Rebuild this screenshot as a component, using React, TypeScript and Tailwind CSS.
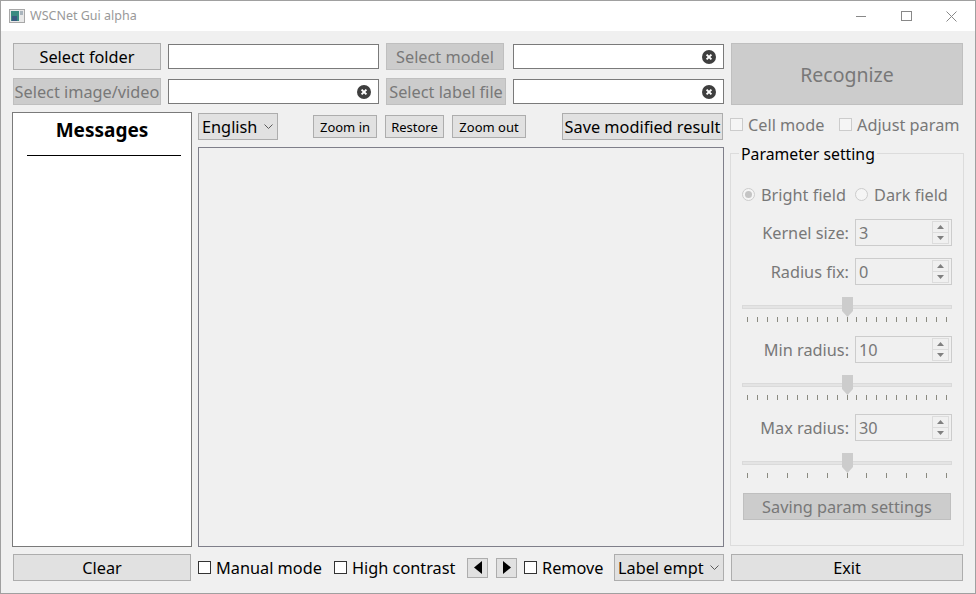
import React from "react";

const base = "flex items-center justify-center whitespace-nowrap border leading-none pt-[2px]";
const active = "bg-[#e1e1e1] border-[#adadad] text-black";
const disabled = "bg-[#cccccc] border-[#bfbfbf] text-[#787878]";

function Btn({ w, h = "h-[27px]", off, size = "text-[16.3px]", children }: { w: string; h?: string; off?: boolean; size?: string; children: React.ReactNode }) {
  return <div className={`${base} ${w} ${h} ${size} ${off ? disabled : active}`}>{children}</div>;
}

function Clear() {
  return (
    <svg width="14" height="14" viewBox="0 0 14 14" className="shrink-0">
      <circle cx="7" cy="7" r="7" fill="#3f3f3f" />
      <path d="M4.6 4.6 9.4 9.4M9.4 4.6 4.6 9.4" stroke="#fff" strokeWidth="2" />
    </svg>
  );
}

function Field({ clear }: { clear?: boolean }) {
  return (
    <div className="flex items-center justify-end w-[211px] h-[25px] bg-white border border-[#7a7a7a] pr-[7px]">
      {clear && <Clear />}
    </div>
  );
}

function Check({ label, off, w }: { label: string; off?: boolean; w: string }) {
  return (
    <div className={`flex items-center gap-[5px] ${w} text-[16.3px] leading-none whitespace-nowrap ${off ? "text-[#787878]" : "text-black"}`}>
      <div className={`w-[13px] h-[13px] shrink-0 border ${off ? "border-[#cccccc] bg-[#f5f5f5]" : "border-[#333333] bg-white"}`} />
      <span className={off ? "" : "pt-[2px]"}>{label}</span>
    </div>
  );
}

function Radio({ label, on, w }: { label: string; on?: boolean; w: string }) {
  return (
    <div className={`flex items-center gap-[6px] ${w} text-[16.3px] leading-none text-[#787878] whitespace-nowrap`}>
      <div className="flex items-center justify-center w-[13px] h-[13px] shrink-0 rounded-full border border-[#cccccc] bg-[#f5f5f5]">
        {on && <div className="w-[7px] h-[7px] rounded-full bg-[#c4c4c4]" />}
      </div>
      {label}
    </div>
  );
}

function Combo({ w, h, label }: { w: string; h: string; label: string }) {
  return (
    <div className={`flex items-center justify-between gap-[2px] ${w} ${h} bg-[#e1e1e1] border border-[#adadad] pl-[3px] pr-[4px] text-[16.3px] leading-[22px] text-black whitespace-nowrap`}>
      <span>{label}</span>
      <svg width="9" height="5" viewBox="0 0 9 5" className="shrink-0">
        <path d="M.5.5 4.5 4.5 8.5.5" fill="none" stroke="#5a5a5a" />
      </svg>
    </div>
  );
}

function Spin({ label, value }: { label: string; value: string }) {
  return (
    <div className="flex items-center justify-end h-[27px] gap-[6px] text-[16.3px] leading-none text-[#787878] whitespace-nowrap">
      <span className="pt-[2px]">{label}</span>
      <div className="flex items-center justify-between w-[97px] h-[27px] border border-[#cccccc] pl-[3px] pr-[2px]">
        <span className="pt-[2px]">{value}</span>
        <div className="flex flex-col w-[17px] h-[23px] border border-[#dcdcdc]">
          <div className="flex-1 flex items-center justify-center border-b border-[#dcdcdc]">
            <svg width="7" height="4" viewBox="0 0 7 4"><path d="M3.5 0 7 4H0z" fill="#808080" /></svg>
          </div>
          <div className="flex-1 flex items-center justify-center">
            <svg width="7" height="4" viewBox="0 0 7 4"><path d="M3.5 4 7 0H0z" fill="#808080" /></svg>
          </div>
        </div>
      </div>
    </div>
  );
}

function Slider({ ticks }: { ticks: number }) {
  const xs = Array.from({ length: ticks }, (_, i) => 5 + (i * 199) / (ticks - 1));
  return (
    <div className="relative w-[210px] h-[26px]">
      <div className="absolute left-0 right-0 top-[8px] h-[4px] bg-[#e4e4e4] border border-[#dadada]" />
      <svg width="11" height="20" viewBox="0 0 11 20" className="absolute left-[100px] top-0">
        <path d="M0 0H11V14L5.5 20 0 14Z" fill="#cccccc" />
      </svg>
      <svg width="210" height="6" viewBox="0 0 210 6" className="absolute left-0 top-[20px]">
        {xs.map((x, i) => (
          <path key={i} d={`M${Math.round(x) + 0.5} 0V5`} stroke="#8a8a80" />
        ))}
      </svg>
    </div>
  );
}

function TitleIcon() {
  return (
    <svg width="16" height="14" viewBox="0 0 16 14">
      <rect x=".5" y=".5" width="15" height="13" fill="#e8e8e8" stroke="#a8a8a8" />
      <rect x="2" y="2" width="8" height="10" fill="#3a8a80" />
      <rect x="3" y="7" width="5" height="5" fill="#3a5a80" />
      <rect x="11" y="2" width="3" height="4" fill="#a9b4bd" />
    </svg>
  );
}

export default function App() {
  return (
    <div className="w-[976px] h-[594px] flex flex-col bg-[#f0f0f0] border border-[#a0a0a0] font-['Noto_Sans','Open_Sans',sans-serif] overflow-hidden">
      <div className="flex items-center h-[30px] shrink-0 bg-white pl-[8px]">
        <TitleIcon />
        <span className="ml-[5px] text-[12.5px] leading-none text-[#999999]">WSCNet Gui alpha</span>
        <div className="ml-auto flex items-center">
          <div className="flex items-center justify-center w-[46px] -mr-px">
            <svg width="10" height="10" viewBox="0 0 10 10"><path d="M0 5.5H10" stroke="#888" /></svg>
          </div>
          <div className="flex items-center justify-center w-[46px]">
            <svg width="11" height="10" viewBox="0 0 11 10"><rect x=".5" y=".5" width="10" height="9" fill="none" stroke="#888" /></svg>
          </div>
          <div className="flex items-center justify-center w-[46px] pr-[2px]">
            <svg width="11" height="11" viewBox="0 0 11 11"><path d="M.5.5 10.5 10.5M10.5.5.5 10.5" stroke="#888" /></svg>
          </div>
        </div>
      </div>

      <div className="flex gap-[6px] pl-[12px] pt-[12px]">
        <div className="flex flex-col w-[711px] shrink-0">
          <div className="flex items-center gap-[7px] h-[27px]">
            <Btn w="w-[148px]">Select folder</Btn>
            <Field />
            <Btn w="w-[118px]" off>Select model</Btn>
            <div className="ml-[2px]"><Field clear /></div>
          </div>
          <div className="flex items-center gap-[7px] h-[27px] mt-[8px]">
            <Btn w="w-[148px]" off>Select image/video</Btn>
            <Field clear />
            <Btn w="w-[120px]" off>Select label file</Btn>
            <Field clear />
          </div>

          <div className="flex gap-[6px] mt-[7px] h-[435px] -ml-px">
            <div className="flex flex-col items-center w-[180px] bg-white border border-[#7a7a7a]">
              <div className="mt-[4px] text-[19px] leading-[26px] font-bold text-black">Messages</div>
              <div className="mt-[12px] ml-[4px] w-[154px] h-px bg-black" />
            </div>
            <div className="flex flex-col w-[526px]">
              <div className="flex items-center h-[29px]">
                <Combo w="w-[80px]" h="h-[27px]" label="English" />
                <div className="ml-[35px]"><Btn w="w-[64px]" h="h-[23px]" size="text-[13px]">Zoom in</Btn></div>
                <div className="ml-[8px]"><Btn w="w-[59px]" h="h-[23px]" size="text-[13px]">Restore</Btn></div>
                <div className="ml-[8px]"><Btn w="w-[74px]" h="h-[23px]" size="text-[13px]">Zoom out</Btn></div>
                <div className="ml-[36px]"><Btn w="w-[161px]">Save modified result</Btn></div>
              </div>
              <div className="mt-[6px] flex-1 border border-[#7f7f8a]" />
            </div>
          </div>

          <div className="flex items-center mt-[7px] h-[27px]">
            <Btn w="w-[178px]">Clear</Btn>
            <div className="ml-[7px]"><Check w="w-[136px]" label="Manual mode" /></div>
            <Check w="w-[133px]" label="High contrast" />
            <div className="w-[21px] h-[20px] flex items-center justify-center bg-[#e1e1e1] border border-[#adadad]">
              <svg width="8" height="13" viewBox="0 0 8 13"><path d="M8 0V13L0 6.5Z" fill="#000" /></svg>
            </div>
            <div className="ml-[8px] w-[21px] h-[20px] flex items-center justify-center bg-[#e1e1e1] border border-[#adadad]">
              <svg width="8" height="13" viewBox="0 0 8 13"><path d="M0 0V13L8 6.5Z" fill="#000" /></svg>
            </div>
            <div className="ml-[7px]"><Check w="w-[90px]" label="Remove" /></div>
            <Combo w="w-[110px]" h="h-[27px]" label="Label empt" />
          </div>
        </div>

        <div className="flex flex-col w-[234px] shrink-0">
          <div className="ml-px"><Btn w="w-[232px]" h="h-[62px]" off size="text-[19.5px]">Recognize</Btn></div>
          <div className="flex items-center h-[40px]">
            <Check w="w-[109px]" label="Cell mode" off />
            <Check w="w-[122px]" label="Adjust param" off />
          </div>
          <div className="relative mt-[8px] h-[393px] border border-[#dcdcdc]">
            <div className="absolute left-[8px] -top-[10px] bg-[#f0f0f0] px-[2px] text-[15.8px] leading-[20px] text-black whitespace-nowrap">Parameter setting</div>
            <div className="flex flex-col pl-[11px] pr-[11px] pt-[31px]">
              <div className="flex items-center h-[20px]">
                <Radio w="w-[113px]" label="Bright field" on />
                <Radio w="w-[96px]" label="Dark field" />
              </div>
              <div className="mt-[14px]"><Spin label="Kernel size:" value="3" /></div>
              <div className="mt-[12px]"><Spin label="Radius fix:" value="0" /></div>
              <div className="mt-[12px]"><Slider ticks={21} /></div>
              <div className="mt-[13px]"><Spin label="Min radius:" value="10" /></div>
              <div className="mt-[12px]"><Slider ticks={21} /></div>
              <div className="mt-[13px]"><Spin label="Max radius:" value="30" /></div>
              <div className="mt-[12px]"><Slider ticks={11} /></div>
              <div className="mt-[14px] ml-px"><Btn w="w-[208px]" off>Saving param settings</Btn></div>
            </div>
          </div>
          <div className="mt-[8px] ml-px"><Btn w="w-[232px]">Exit</Btn></div>
        </div>
      </div>
    </div>
  );
}
